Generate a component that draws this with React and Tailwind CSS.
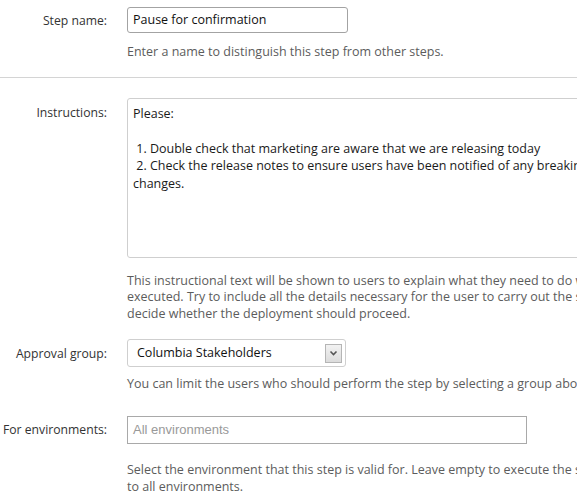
import React from 'react';

const font = { fontFamily: '"Open Sans", "Noto Sans", sans-serif' };

const Label = ({ children, className = '' }) => (
    <div className={`w-[107px] shrink-0 text-right text-[12.2px] text-[#333] ${className}`}>{children}</div>
);

const Hint = ({ children, className = '' }) => (
    <div className={`whitespace-nowrap text-[12.5px] leading-[16.5px] text-[#5c5c5c] ${className}`}>{children}</div>
);

export default function App() {
    return (
        <div className="w-[577px] h-[501px] overflow-hidden bg-white" style={font}>
            {/* step name */}
            <div className="flex gap-5 pt-[7px]">
                <Label className="pt-[5px]">Step name:</Label>
                <div className="flex flex-col">
                    <div className="w-[221px] h-[26px] rounded-[3px] border border-[#a3a3a3] px-[5px] text-[12.5px] leading-[24px] text-[#111]">
                        Pause for confirmation
                    </div>
                    <Hint className="mt-[11px]">Enter a name to distinguish this step from other steps.</Hint>
                </div>
            </div>

            <div className="mt-[16px] h-px bg-[#d4d4d4]" />

            {/* instructions */}
            <div className="flex gap-5 pt-[20px]">
                <Label className="pt-[6px]">Instructions:</Label>
                <div className="flex flex-col">
                    <div className="w-[560px] h-[160px] rounded-[3px] border border-[#cfcfcf] px-[5px] pt-[6px] text-[12.5px] leading-[17.5px] text-[#1a1a1a] whitespace-pre">
                        {'Please:\n\n 1. Double check that marketing are aware that we are releasing today\n 2. Check the release notes to ensure users have been notified of any breaking\nchanges.'}
                    </div>
                    <Hint className="mt-[15px]">
                        This instructional text will be shown to users to explain what they need to do when this step is<br />
                        executed. Try to include all the details necessary for the user to carry out the step, and to<br />
                        decide whether the deployment should proceed.
                    </Hint>
                </div>
            </div>

            {/* approval group */}
            <div className="flex gap-5 pt-[17px]">
                <Label className="pt-[6px]">Approval group:</Label>
                <div className="flex flex-col">
                    <div className="flex w-[219px] h-[28px] items-center justify-between rounded-[3px] border border-[#cfcfcf] pl-[9px] pr-[3px]">
                        <span className="text-[12.5px] text-[#111]">Columbia Stakeholders</span>
                        <span className="flex h-[19px] w-[17px] items-center justify-center border border-[#b5b5b5] bg-gradient-to-b from-[#f2f2f2] to-[#dcdcdc]">
                            <svg width="9" height="6" viewBox="0 0 9 6">
                                <path d="M1.5 1.5 L4.5 4.5 L7.5 1.5" fill="none" stroke="#555" strokeWidth="1.6" />
                            </svg>
                        </span>
                    </div>
                    <Hint className="mt-[9px]">You can limit the users who should perform the step by selecting a group above.</Hint>
                </div>
            </div>

            {/* environments */}
            <div className="flex gap-5 pt-[23px]">
                <Label className="pt-[5px]">For environments:</Label>
                <div className="flex flex-col">
                    <div
                        className="w-[400px] h-[28px] border border-[#a9a9a9] px-[5px] text-[13px] leading-[26px] text-[#999]"
                        style={{ fontFamily: '"Liberation Sans", Arial, sans-serif' }}
                    >
                        All environments
                    </div>
                    <Hint className="mt-[17px] leading-[17.5px]">
                        Select the environment that this step is valid for. Leave empty to execute the step regardless<br />
                        to all environments.
                    </Hint>
                </div>
            </div>
        </div>
    );
}
